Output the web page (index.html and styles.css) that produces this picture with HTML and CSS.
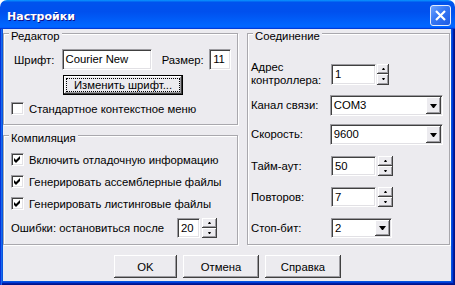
FILE: index.html
```html
<!DOCTYPE html>
<html lang="ru">
<head>
    <meta charset="UTF-8">
    <title>Настройки</title>
    <link rel="stylesheet" href="styles.css">
</head>
<body>
<div class="window">
    <div class="titlebar">
        <span class="title">Настройки</span>
        <div class="close">
            <svg width="19" height="19" viewBox="0 0 19 19">
                <path d="M5 5 L14 14 M14 5 L5 14" stroke="#fff" stroke-width="2.2" fill="none"/>
            </svg>
        </div>
    </div>
    <div class="frame">
        <div class="client">
            <div class="columns">
                <div class="leftcol">
                    <div class="group editor">
                        <div class="gtitle">Редактор</div>
                        <div class="fontrow">
                            <span class="lbl">Шрифт:</span>
                            <div class="edit fontname">Courier New</div>
                            <span class="lbl">Размер:</span>
                            <div class="edit fontsize">11</div>
                        </div>
                        <div class="btn raised deflt changefont"><span class="focus">Изменить шрифт...</span></div>
                        <div class="check ctxmenu"><span class="box"></span>Стандартное контекстное меню</div>
                    </div>
                    <div class="group compile">
                        <div class="gtitle">Компиляция</div>
                        <div class="check first"><span class="box on"><svg width="9" height="9" viewBox="0 0 9 9"><polygon points="1,3 3,5 7,1 7,4 3,8 1,6" fill="#000"/></svg></span>Включить отладочную информацию</div>
                        <div class="check"><span class="box on"><svg width="9" height="9" viewBox="0 0 9 9"><polygon points="1,3 3,5 7,1 7,4 3,8 1,6" fill="#000"/></svg></span>Генерировать ассемблерные файлы</div>
                        <div class="check"><span class="box on"><svg width="9" height="9" viewBox="0 0 9 9"><polygon points="1,3 3,5 7,1 7,4 3,8 1,6" fill="#000"/></svg></span>Генерировать листинговые файлы</div>
                        <div class="errrow">
                            <span class="errlbl">Ошибки: остановиться после</span>
                            <div class="spin">
                                <div class="edit errval">20</div>
                                <div class="spinbtns wide">
                                    <div class="raised sb"><i class="up"></i></div>
                                    <div class="raised sb"><i class="dn"></i></div>
                                </div>
                            </div>
                        </div>
                    </div>
                </div>
                <div class="group conn">
                    <div class="gtitle">Соединение</div>
                    <div class="crow addr">
                        <span class="clbl">Адрес<br>контроллера:</span>
                        <div class="spin">
                            <div class="edit num">1</div>
                            <div class="spinbtns">
                                <div class="raised sb"><i class="up"></i></div>
                                <div class="raised sb"><i class="dn"></i></div>
                            </div>
                        </div>
                    </div>
                    <div class="crow">
                        <span class="clbl">Канал связи:</span>
                        <div class="combo long"><span class="ctext">COM3</span><div class="raised cbtn"><i class="dn big"></i></div></div>
                    </div>
                    <div class="crow">
                        <span class="clbl">Скорость:</span>
                        <div class="combo long"><span class="ctext">9600</span><div class="raised cbtn"><i class="dn big"></i></div></div>
                    </div>
                    <div class="crow gap">
                        <span class="clbl">Тайм-аут:</span>
                        <div class="spin">
                            <div class="edit num short">50</div>
                            <div class="spinbtns wide">
                                <div class="raised sb"><i class="up"></i></div>
                                <div class="raised sb"><i class="dn"></i></div>
                            </div>
                        </div>
                    </div>
                    <div class="crow gap">
                        <span class="clbl">Повторов:</span>
                        <div class="spin">
                            <div class="edit num short">7</div>
                            <div class="spinbtns wide">
                                <div class="raised sb"><i class="up"></i></div>
                                <div class="raised sb"><i class="dn"></i></div>
                            </div>
                        </div>
                    </div>
                    <div class="crow gap">
                        <span class="clbl">Стоп-бит:</span>
                        <div class="combo stop"><span class="ctext">2</span><div class="raised cbtn"><i class="dn big"></i></div></div>
                    </div>
                </div>
            </div>
            <div class="buttons">
                <div class="btn raised okbtn">OK</div>
                <div class="btn raised">Отмена</div>
                <div class="btn raised">Справка</div>
            </div>
        </div>
    </div>
</div>
</body>
</html>
```

FILE: styles.css
```css
body {
    margin: 0;
    background: #fff;
    font-family: "Liberation Sans", Arial, sans-serif;
    font-size: 11.3px;
    color: #000;
}

.window {
    width: 455px;
    height: 285px;
    display: flex;
    flex-direction: column;
}

/* title bar */
.titlebar {
    height: 29px;
    box-sizing: border-box;
    display: flex;
    align-items: flex-start;
    justify-content: space-between;
    padding: 5px 4px 0 7px;
    border-radius: 7px 7px 0 0;
    background: linear-gradient(180deg, #0997ff, #0053ee 8%, #0050ee 40%, #0066ff 88%, #0066ff 93%, #005bff 95%, #003dd7 96%, #003dd7);
}
.title {
    margin-top: 5px;
    line-height: 13px;
    color: #fff;
    font-family: "DejaVu Sans", sans-serif;
    font-weight: bold;
    font-size: 11px;
    text-shadow: 1px 1px #0f1089;
}
.close {
    width: 21px;
    height: 21px;
    box-sizing: border-box;
    border: 1px solid #e6ecfb;
    border-radius: 3px;
    background: linear-gradient(135deg, #6da3ff 0%, #3576f3 45%, #1d5be6 100%);
}
.close svg {
    display: block;
}

.frame {
    flex: 1;
    display: flex;
    padding: 0 4px 4px 3px;
    background: #0855dd;
    box-shadow: inset 1px 0 #0831d9, inset 2px 0 #166aee, inset -1px -1px #00138c, inset -2px -2px #001ea0, inset -3px -3px #003bda;
}
.client {
    flex: 1;
    background: #ecebef;
}

.columns {
    display: flex;
    margin-top: 4px;
    gap: 9px;
}
.leftcol {
    width: 235px;
    display: flex;
    flex-direction: column;
    gap: 10px;
}

/* group boxes */
.group {
    box-sizing: border-box;
    border: 1px solid #a9a8ad;
    box-shadow: inset 1px 1px #fff, 1px 1px #fff;
    padding: 0 6px 0 7px;
}
.gtitle {
    width: max-content;
    margin: -5px 0 0 -2px;
    padding: 0 2px;
    line-height: 14px;
    background: #ecebef;
}
.editor {
    height: 92px;
}
.compile {
    height: 110px;
}
.conn {
    width: 203px;
    height: 212px;
    padding-left: 3px;
}
.conn .gtitle {
    margin-left: 2px;
}

/* sunken edit */
.edit {
    box-sizing: border-box;
    height: 21px;
    padding: 0 3px;
    line-height: 19px;
    white-space: nowrap;
    overflow: hidden;
    background: #fff;
    border: 1px solid;
    border-color: #9d9ca1 #fff #fff #9d9ca1;
    box-shadow: inset 1px 1px #404040, inset -1px -1px #e2e1e5;
}

/* raised button face */
.raised {
    box-sizing: border-box;
    background: #ecebef;
    box-shadow: inset -1px -1px #404040, inset 1px 1px #fff, inset -2px -2px #9d9ca1;
}
.btn {
    display: flex;
    align-items: center;
    justify-content: center;
}

/* editor group */
.fontrow {
    display: flex;
    align-items: center;
    height: 21px;
    margin-top: 6px;
}
.lbl {
    width: 51px;
    padding-left: 3px;
    box-sizing: border-box;
}
.fontrow .lbl + .edit + .lbl {
    width: 58px;
    padding-left: 10px;
}
.fontname {
    width: 91px;
}
.fontsize {
    width: 22px;
}
.changefont {
    width: 120px;
    height: 20px;
    margin: 5px 0 0 52px;
}
.deflt {
    border: 1px solid #000;
}
.focus {
    flex: 1;
    align-self: stretch;
    margin: 2px;
    border: 1px dotted #000;
    display: flex;
    align-items: center;
    justify-content: center;
}

/* check boxes */
.check {
    display: flex;
    align-items: center;
    height: 13px;
    white-space: nowrap;
}
.box {
    width: 13px;
    height: 13px;
    box-sizing: border-box;
    margin-right: 5px;
    display: flex;
    align-items: center;
    justify-content: center;
    background: #fff;
    border: 1px solid;
    border-color: #9d9ca1 #fff #fff #9d9ca1;
    box-shadow: inset 1px 1px #404040, inset -1px -1px #e2e1e5;
}
.box svg {
    display: block;
}
.ctxmenu {
    margin-top: 7px;
}
.compile .check {
    margin-top: 9px;
}
.compile .check.first {
    margin-top: 8px;
}

.errrow {
    display: flex;
    align-items: center;
    margin-top: 8px;
}
.errlbl {
    width: 166px;
}
.errval {
    width: 23px;
    height: 20px;
}

/* spinners */
.spin {
    display: flex;
}
.spinbtns {
    width: 12px;
    margin-left: 1px;
    display: flex;
    flex-direction: column;
}
.spinbtns.wide {
    width: 15px;
    margin-left: 2px;
}
.sb {
    flex: 1;
    display: flex;
    align-items: center;
    justify-content: center;
}
.up {
    width: 1px;
    border-left: 1px solid transparent;
    border-right: 1px solid transparent;
    border-bottom: 2px solid #000;
}
.dn {
    width: 1px;
    border-left: 1px solid transparent;
    border-right: 1px solid transparent;
    border-top: 2px solid #000;
}
.dn.big {
    border-left-width: 3px;
    border-right-width: 3px;
    border-top-width: 4px;
}

/* connection group */
.crow {
    display: flex;
    align-items: center;
    margin-top: 8px;
}
.crow.addr {
    margin-top: 18px;
}
.crow.gap {
    margin-top: 11px;
}
.clbl {
    width: 80px;
    line-height: 13px;
}
.num {
    width: 45px;
}
.num.short {
    height: 20px;
}
.combo {
    box-sizing: border-box;
    height: 21px;
    display: flex;
    padding: 1px;
    background: #fff;
    border: 1px solid;
    border-color: #9d9ca1 #fff #fff #9d9ca1;
    box-shadow: inset 1px 1px #404040, inset -1px -1px #e2e1e5;
}
.combo.long {
    width: 115px;
}
.combo.stop {
    width: 61px;
    height: 20px;
}
.ctext {
    flex: 1;
    padding-left: 2px;
    line-height: 17px;
}
.cbtn {
    width: 15px;
    display: flex;
    align-items: center;
    justify-content: center;
}

/* bottom buttons */
.buttons {
    display: flex;
    margin: 10px 0 0 111px;
    gap: 6px;
}
.buttons .btn {
    width: 76px;
    height: 23px;
}
.buttons .okbtn {
    width: 63px;
}
```
